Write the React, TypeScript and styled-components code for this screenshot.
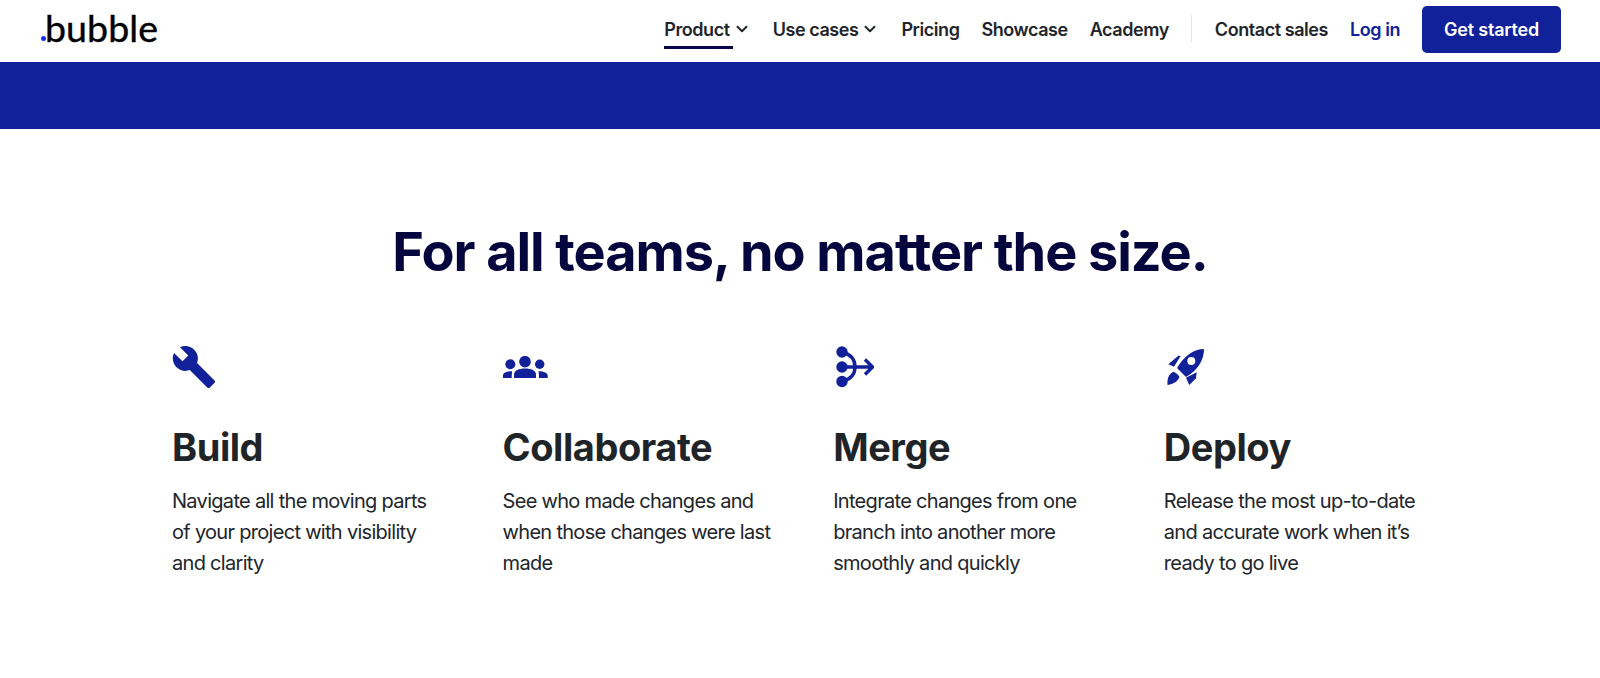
import styled, { createGlobalStyle } from "styled-components";
import { MdBuild } from "react-icons/md";
import { FiChevronDown } from "react-icons/fi";

const GlobalStyle = createGlobalStyle`
  html, body {
    margin: 0;
    padding: 0;
    background: #fff;
    font-family: Inter, "Liberation Sans", sans-serif;
  }
`;

const Nav = styled.nav`
  height: 62px;
  padding: 0 39px 4px 41px;
  display: flex;
  align-items: center;
  justify-content: space-between;
  box-sizing: border-box;
`;
const Logo = styled.a`
  position: relative;
  margin-bottom: 4px;
  font-family: Lato, sans-serif;
  font-size: 37.5px;
  font-weight: 400;
  line-height: 55px;
  letter-spacing: 0.1px;
  -webkit-text-stroke: 0.4px #000;
  color: #000;
  padding-left: 4px;
`;
const LogoDot = styled.i`
  position: absolute;
  left: 0;
  bottom: 14px;
  width: 5px;
  height: 5px;
  border-radius: 50%;
  background: #1c2eff;
`;
const Links = styled.div`
  display: flex;
  align-items: center;
`;
const NavLink = styled.a<{ $active?: boolean; $blue?: boolean }>`
  position: relative;
  display: flex;
  align-items: center;
  margin-right: 22px;
  font-size: 18px;
  font-weight: 600;
  letter-spacing: -0.44px;
  color: ${(p) => (p.$blue ? "#10219a" : "#21252b")};
  &::after {
    content: "";
    display: ${(p) => (p.$active ? "block" : "none")};
    position: absolute;
    left: 0;
    width: 69px;
    top: 27px;
    height: 3px;
    background: #07064a;
  }
`;
const Divider = styled.span`
  width: 1px;
  height: 28px;
  margin-right: 23px;
  background: #e6e7e9;
`;
const CTA = styled.a`
  width: 139px;
  height: 47px;
  display: flex;
  align-items: center;
  justify-content: center;
  border-radius: 5px;
  background: #10219a;
  color: #fff;
  font-size: 18px;
  font-weight: 600;
  letter-spacing: -0.2px;
`;
const Band = styled.div`
  height: 67px;
  background: #10219a;
`;
const Section = styled.section`
  padding-top: 90px;
`;
const Heading = styled.h1`
  margin: 0;
  text-align: center;
  font-size: 54px;
  line-height: 66px;
  font-weight: 700;
  letter-spacing: -1.05px;
  color: #06063f;
`;
const Grid = styled.div`
  margin: 58px 0 0 172px;
  display: grid;
  grid-template-columns: repeat(4, 330.6px);
`;
const Feature = styled.div`
  width: 272px;
`;
const IconBox = styled.div`
  height: 48px;
  display: flex;
  align-items: center;
  color: #10219a;
`;
const Title = styled.h2`
  margin: 33px 0 0;
  font-size: 38px;
  line-height: 46px;
  font-weight: 700;
  letter-spacing: -0.45px;
  color: #1f2428;
`;
const Text = styled.p`
  margin: 16px 0 0;
  font-size: 20px;
  line-height: 31px;
  font-weight: 400;
  letter-spacing: -0.7px;
  color: #21252b;
`;

const GroupsIcon = () => (
  <svg width="45" height="22" viewBox="0 0 45 22" fill="currentColor">
    <circle cx="22" cy="5.7" r="5.8" />
    <path d="M11 22V18.5C11 14.5 16 12.5 22 12.5S33 14.5 33 18.5V22Z" />
    <circle cx="7.3" cy="8.3" r="5" />
    <path d="M0 22V19.5C0 17 3 15.2 9 15.2C9 17 8.7 19 8.7 22Z" />
    <circle cx="36.7" cy="8.3" r="4.7" />
    <path d="M35.5 15.2C41 15.2 44.7 17 44.7 19.5V22H36C36 19 35.8 17 35.5 15.2Z" />
  </svg>
);

const MergeIcon = () => (
  <svg width="38" height="42" viewBox="0 0 38 42" fill="none" style={{ marginLeft: 3 }}>
    <circle cx="6" cy="6" r="5.7" fill="currentColor" />
    <circle cx="6" cy="21" r="5.7" fill="currentColor" />
    <circle cx="6" cy="35.5" r="5.7" fill="currentColor" />
    <path
      d="M6 6C14 8 19 13 19 21C19 29 14 33.5 6 35.5M6 21H35M29 13.5L36.5 21L29 28.5"
      stroke="currentColor"
      strokeWidth="3.4"
    />
  </svg>
);

const RocketIcon = () => (
  <svg width="38" height="38" viewBox="0 0 38 38" fill="currentColor" style={{ marginLeft: 3 }}>
    <path
      fillRule="evenodd"
      d="M37 1C37 12 31 22 19 29L10 20C17 8 27 1 37 1ZM24.3 9A4 4 0 1 0 24.3 17A4 4 0 1 0 24.3 9Z"
    />
    <path d="M1.3 16.3L11.3 7.7L13.7 8L7 18.7Z" />
    <path d="M29.7 24.3L29 30.3L22.3 37L19 29.7Z" />
    <path d="M0.5 37C0 30 2 26 6 24C8 24 11 26 12.5 29C11 33 7 36 0.5 37Z" />
  </svg>
);

const features = [
  {
    icon: <MdBuild size={46} style={{ marginLeft: -1 }} />,
    title: "Build",
    text: "Navigate all the moving parts of your project with visibility and clarity",
  },
  {
    icon: <GroupsIcon />,
    title: "Collaborate",
    text: "See who made changes and when those changes were last made",
  },
  {
    icon: <MergeIcon />,
    title: "Merge",
    text: "Integrate changes from one branch into another more smoothly and quickly",
  },
  {
    icon: <RocketIcon />,
    title: "Deploy",
    text: "Release the most up-to-date and accurate work when it’s ready to go live",
  },
];

export default function App() {
  return (
    <>
      <GlobalStyle />
      <Nav>
        <Logo>
          <LogoDot />
          bubble
        </Logo>
        <Links>
          <NavLink $active>
            Product
            <FiChevronDown size={18} strokeWidth={2.6} style={{ marginLeft: 3 }} />
          </NavLink>
          <NavLink>
            Use cases
            <FiChevronDown size={18} strokeWidth={2.6} style={{ marginLeft: 3 }} />
          </NavLink>
          <NavLink>Pricing</NavLink>
          <NavLink>Showcase</NavLink>
          <NavLink>Academy</NavLink>
          <Divider />
          <NavLink>Contact sales</NavLink>
          <NavLink $blue>Log in</NavLink>
          <CTA>Get started</CTA>
        </Links>
      </Nav>
      <Band />
      <Section>
        <Heading>For all teams, no matter the size.</Heading>
        <Grid>
          {features.map((f) => (
            <Feature key={f.title}>
              <IconBox>{f.icon}</IconBox>
              <Title>{f.title}</Title>
              <Text>{f.text}</Text>
            </Feature>
          ))}
        </Grid>
      </Section>
    </>
  );
}
